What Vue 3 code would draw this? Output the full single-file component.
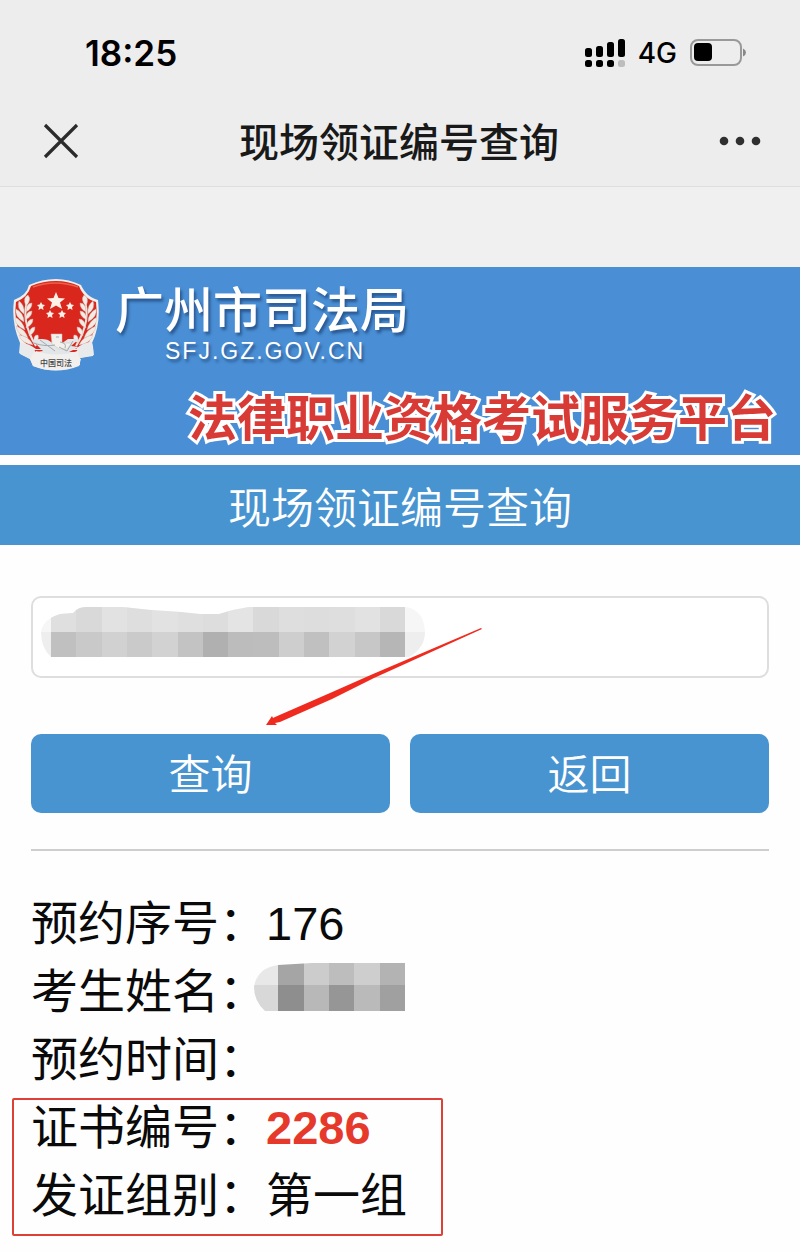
<script setup>
import { ref } from 'vue';

const keyword = ref('');

// 訊號格：上排高度遞增，下排為第二張卡
const signalBars = [
    { x: 0, y: 9, h: 9 },
    { x: 11, y: 7, h: 11 },
    { x: 22, y: 3, h: 15 },
    { x: 33, y: 0, h: 18 }
];

// 馬賽克色塊（上排 / 下排）
const inputTop = ['#dfdfdf', '#d9d9d9', '#e2e2e2', '#dedede', '#e2e2e2', '#dfdfdf', '#dddddd', '#e4e4e4', '#d9d9d9', '#dedede', '#dddddd', '#dedede', '#e2e2e2', '#d9d9d9'];
const inputBottom = ['#c0c0c0', '#c9c9c9', '#d1d1d1', '#cacaca', '#d2d2d2', '#c3c3c3', '#b0b0b0', '#bcbcbc', '#bdbdbd', '#cecece', '#c0c0c0', '#d2d2d2', '#c7c7c7', '#b6b6b6'];
const nameTop = ['#e8e8e8', '#a5a5a5', '#cccccc', '#bdbdbd', '#cecece', '#b3b3b3'];
const nameBottom = ['#d8d8d8', '#8e8e8e', '#b8b8b8', '#969696', '#bababa', '#a0a0a0'];

const clearKeyword = () => {
    keyword.value = '';
};
</script>

<template>
    <div class="page">
        <header class="top">
            <div class="status">
                <span class="time">18:25</span>
                <div class="status-right">
                    <svg class="signal" width="40" height="28" viewBox="0 0 40 28">
                        <g v-for="(bar, i) in signalBars" :key="i">
                            <rect :x="bar.x" :y="bar.y" width="7" :height="bar.h" rx="2.5" />
                            <rect :x="bar.x" y="21" width="7" height="7" rx="2.5" :fill="i === 3 ? '#bdbdbd' : '#000'" />
                        </g>
                    </svg>
                    <span class="network">4G</span>
                    <svg class="battery" width="56" height="28" viewBox="0 0 56 28">
                        <rect x="1" y="1" width="50" height="25" rx="7" fill="none" stroke="#999" stroke-width="2" />
                        <rect x="4" y="4" width="18" height="18" rx="4" />
                        <path d="M53 9.500Q56 11 56 13.500T53 17.500Z" fill="#888" />
                    </svg>
                </div>
            </div>
            <nav class="nav">
                <button class="icon-btn" type="button" aria-label="关闭">
                    <svg width="36" height="36" viewBox="0 0 36 36">
                        <path d="M2 2L34 34M34 2L2 34" stroke="#2b2b2b" stroke-width="3.200" />
                    </svg>
                </button>
                <h1>现场领证编号查询</h1>
                <button class="icon-btn" type="button" aria-label="更多">
                    <svg width="42" height="10" viewBox="0 0 42 10" fill="#2f2f2f">
                        <circle cx="5" cy="5" r="4.300" />
                        <circle cx="21" cy="5" r="4.300" />
                        <circle cx="37" cy="5" r="4.300" />
                    </svg>
                </button>
            </nav>
        </header>

        <div class="banner">
            <div class="brand">
                <svg class="emblem" width="88" height="94" viewBox="0 0 88 94">
                    <path d="M44 1Q57 1 69 7C72 14 78 20 86 22Q89 47 80 65Q82 70 81 78L68 80V87Q44 97 21 88L18 81L8 76L8 65Q-1 45 2 22Q15 17 17 7Q30 1 44 1Z" fill="#f3eee9" />
                    <path d="M44 3Q56 3 67 8C70 16 76 22 84 24Q87 46 77 64L64 74H24L11 63Q1 43 4 24Q16 19 19 8Q31 3 44 3Z" fill="#d9271e" />
                    <path d="M21 9Q43 1 66 9" fill="none" stroke="#eb624b" stroke-width="1.500" />
                    <g fill="#fff1e8">
                        <path d="M44 14L46.500 20L53 20.500L48 24.500L50 31L44 27.500L38 31L40 24.500L35 20.500L41.500 20Z" />
                        <path id="star" d="M29 24L30.300 26.500L33 27L31 29L31.500 32L29 30.500L26.500 32L27 29L25 27L27.700 26.500Z" />
                        <use href="#star" x="29" />
                        <use href="#star" x="9" y="8" />
                        <use href="#star" x="21" y="8" />
                    </g>
                    <g id="wheat">
                        <path d="M16 20Q8 42 24 68" fill="none" stroke="#f0e6e0" stroke-width="2" />
                        <g fill="#f1ebe6" stroke="#c9b5ad" stroke-width=".4">
                            <path d="M14 28Q10 20 16 17Q20 22 14 28ZM12 36Q4 30 7 23Q13 27 12 36ZM12 44Q2 38 4 31Q12 35 12 44ZM13 52Q2 47 3 39Q11 43 13 52ZM16 60Q5 57 4 48Q13 51 16 60ZM21 67Q9 65 7 57Q17 58 21 67Z" />
                            <path d="M14 34Q14 25 20 25Q20 31 14 34ZM13 42Q14 33 20 33Q20 39 13 42ZM14 50Q15 41 21 41Q21 47 14 50ZM17 58Q17 49 23 49Q23 55 17 58ZM22 65Q21 56 26 57Q28 62 22 65Z" />
                        </g>
                    </g>
                    <use href="#wheat" transform="matrix(-1 0 0 1 88 0)" />
                    <path d="M8 65Q17 65 24 71L64 71Q71 64 80 64L82 77L68 80L65 72H23L18 81L7 75Z" fill="#e9eaeb" />
                    <path d="M21 62Q34 59 39 64L46 68L56 61L67 61L59 68L67 69L57 74L66 75L46 78L24 74L31 73L25 67Z" fill="#e3e6e8" />
                    <path d="M39 56H50V65H60L55 71H47L40 66Z" fill="#f4f0eb" stroke="#c9c2bb" stroke-width=".5" />
                    <path d="M21 65Q34 69 43 67M28 62L43 73M47 69L55 73L61 63M44 59H47M48 64Q55 65 53 70" fill="none" stroke="#a3abb0" stroke-width="1" />
                    <path d="M18 81Q24 79 24 73Q44 80 66 73Q65 80 69 81L67 88Q44 97 21 88Z" fill="#f1f0ee" />
                    <text x="44" y="88" text-anchor="middle" font-size="8" font-weight="500" fill="#444">中国司法</text>
                </svg>
                <div class="brand-text">
                    <p class="bureau">广州市司法局</p>
                    <p class="domain">SFJ.GZ.GOV.CN</p>
                </div>
            </div>
            <p class="platform">法律职业资格考试服务平台</p>
        </div>

        <h2 class="section-title">现场领证编号查询</h2>

        <main class="content">
            <form @submit.prevent>
                <div class="field">
                    <input v-model="keyword" type="text" aria-label="证件号码">
                    <svg class="field-mask" width="400" height="80" viewBox="0 0 400 80">
                        <defs>
                            <clipPath id="brush">
                                <path d="M10 35Q12 22 29 17L42 16Q47 10 54 10H92L120 13L150 15L169 17H188Q203 12 218 10H375Q393 13 394 35Q394 51 378 60H20Q10 51 10 35Z" />
                            </clipPath>
                        </defs>
                        <g clip-path="url(#brush)" shape-rendering="crispEdges">
                            <rect width="400" height="35" fill="#f6f6f6" />
                            <rect y="35" width="400" height="45" fill="#eeeeee" />
                            <rect v-for="(c, i) in inputTop" :key="'t' + i" :x="20 + i * 25.300" y="10" :width="i === 13 ? 25 : 26" height="25" :fill="c" />
                            <rect v-for="(c, i) in inputBottom" :key="'b' + i" :x="20 + i * 25.300" y="35" :width="i === 13 ? 25 : 26" height="25" :fill="c" />
                        </g>
                    </svg>
                    <!-- 指向查詢按鈕的紅色箭頭 -->
                    <svg class="arrow" width="216" height="98" viewBox="0 0 216 98">
                        <path d="M215 0L107 46L64 65L9 89L7 90L6 88L0 97L11 97L9 95L14 94L66 71L108 50L216 1Z" fill="#ef2b20" />
                    </svg>
                </div>
                <div class="actions">
                    <button type="submit">查询</button>
                    <button type="button" @click="clearKeyword">返回</button>
                </div>
            </form>

            <hr>

            <div class="result">
                <div class="row"><span>预约序号：</span><span>176</span></div>
                <div class="row">
                    <span>考生姓名：</span>
                    <svg class="name-mask" width="152" height="48" viewBox="0 0 152 48">
                        <defs>
                            <clipPath id="name-brush">
                                <path d="M0 24Q3 5 24 2L58 0H151V48H11Q0 38 0 24Z" />
                            </clipPath>
                        </defs>
                        <g clip-path="url(#name-brush)" shape-rendering="crispEdges">
                            <rect v-for="(c, i) in nameTop" :key="'t' + i" :x="i * 25.300 - 1" y="0" width="26" height="22" :fill="c" />
                            <rect v-for="(c, i) in nameBottom" :key="'b' + i" :x="i * 25.300 - 1" y="22" width="26" height="26" :fill="c" />
                        </g>
                    </svg>
                </div>
                <div class="row"><span>预约时间：</span></div>
                <div class="marked">
                    <div class="row"><span>证书编号：</span><strong>2286</strong></div>
                    <div class="row"><span>发证组别：</span><span>第一组</span></div>
                </div>
            </div>
        </main>
    </div>
</template>

<style>
body {
    margin: 0;
    background: #fefefe;
}
</style>

<style scoped>
.page {
    font-family: "Liberation Sans", "Noto Sans CJK SC", sans-serif;
    color: #0a0a0a;
    padding-bottom: 16px;
}
h1, h2, p {
    margin: 0;
}
svg {
    display: block;
    flex: none;
}
.top {
    background: #ededed;
    border-bottom: 1px solid #dedede;
}
.status {
    display: flex;
    align-items: center;
    justify-content: space-between;
    height: 96px;
    padding: 10px 54px 0 85px;
    box-sizing: border-box;
    font-family: Inter, sans-serif;
    color: #000;
}
.time {
    font-size: 35px;
    font-weight: 600;
}
.status-right {
    display: flex;
    align-items: center;
    gap: 13px;
}
.network {
    font-size: 28px;
    font-weight: 500;
}
.nav {
    display: flex;
    align-items: center;
    justify-content: space-between;
    height: 90px;
    padding: 0 39px 0 43px;
}
.nav h1 {
    padding-top: 4px;
    font-size: 40px;
    font-weight: 500;
    line-height: 60px;
    color: #191919;
}
.icon-btn {
    padding: 0;
    border: 0;
    background: none;
}
.banner {
    padding: 8px 24px 4px 12px;
    border-top: 80px solid #f0f0f0;
    background: #4a8fd5;
}
.brand {
    display: flex;
    gap: 15px;
    height: 112px;
}
.emblem {
    margin-top: 3px;
}
.brand-text {
    padding-top: 4px;
    color: #fff;
    text-shadow: 2px 3px 3px rgba(20, 50, 100, 0.6);
}
.bureau {
    font-size: 49px;
    font-weight: 500;
    line-height: 64px;
}
.domain {
    margin-left: 50px;
    font-size: 23px;
    line-height: 16px;
    letter-spacing: 2px;
}
.platform {
    font-size: 49px;
    font-weight: 700;
    line-height: 64px;
    text-align: right;
    white-space: nowrap;
    color: #d83a35;
    -webkit-text-stroke: 6px #fff;
    stroke-linejoin: round;
    paint-order: stroke fill;
}
.section-title {
    height: 80px;
    margin-top: 10px;
    padding-top: 4px;
    box-sizing: border-box;
    background: #4894d1;
    color: #fff;
    font-size: 43px;
    font-weight: 350;
    line-height: 80px;
    text-align: center;
}
.content {
    padding: 51px 31px 0;
}
.field {
    position: relative;
}
.field input {
    display: block;
    width: 100%;
    height: 82px;
    box-sizing: border-box;
    padding: 0 20px;
    border: 2px solid #dedede;
    border-radius: 10px;
    background: #fff;
    font-size: 42px;
}
.field-mask {
    position: absolute;
    left: 0;
    top: 1px;
    pointer-events: none;
}
.arrow {
    position: absolute;
    left: 235px;
    top: 32px;
    pointer-events: none;
}
.actions {
    display: grid;
    grid-template-columns: 1fr 1fr;
    gap: 20px;
    margin-top: 56px;
}
.actions button {
    height: 79px;
    padding: 0 0 4px;
    border: 0;
    border-radius: 10px;
    background: #4894d1;
    color: #fff;
    font-family: inherit;
    font-size: 42px;
    font-weight: 350;
}
hr {
    height: 2px;
    margin: 36px 0 39px;
    border: 0;
    background: #cecece;
}
.row {
    display: flex;
    align-items: center;
    height: 68px;
    font-size: 47px;
    line-height: 68px;
}
.row strong {
    color: #e6392c;
}
.name-mask {
    align-self: flex-start;
    margin: 5px 0 0 -12px;
}
.marked {
    position: relative;
    width: fit-content;
}
.marked::after {
    content: "";
    position: absolute;
    inset: 4px -36px -6px -19px;
    border: 2px solid #dc4036;
    border-radius: 2px;
    pointer-events: none;
}
</style>
